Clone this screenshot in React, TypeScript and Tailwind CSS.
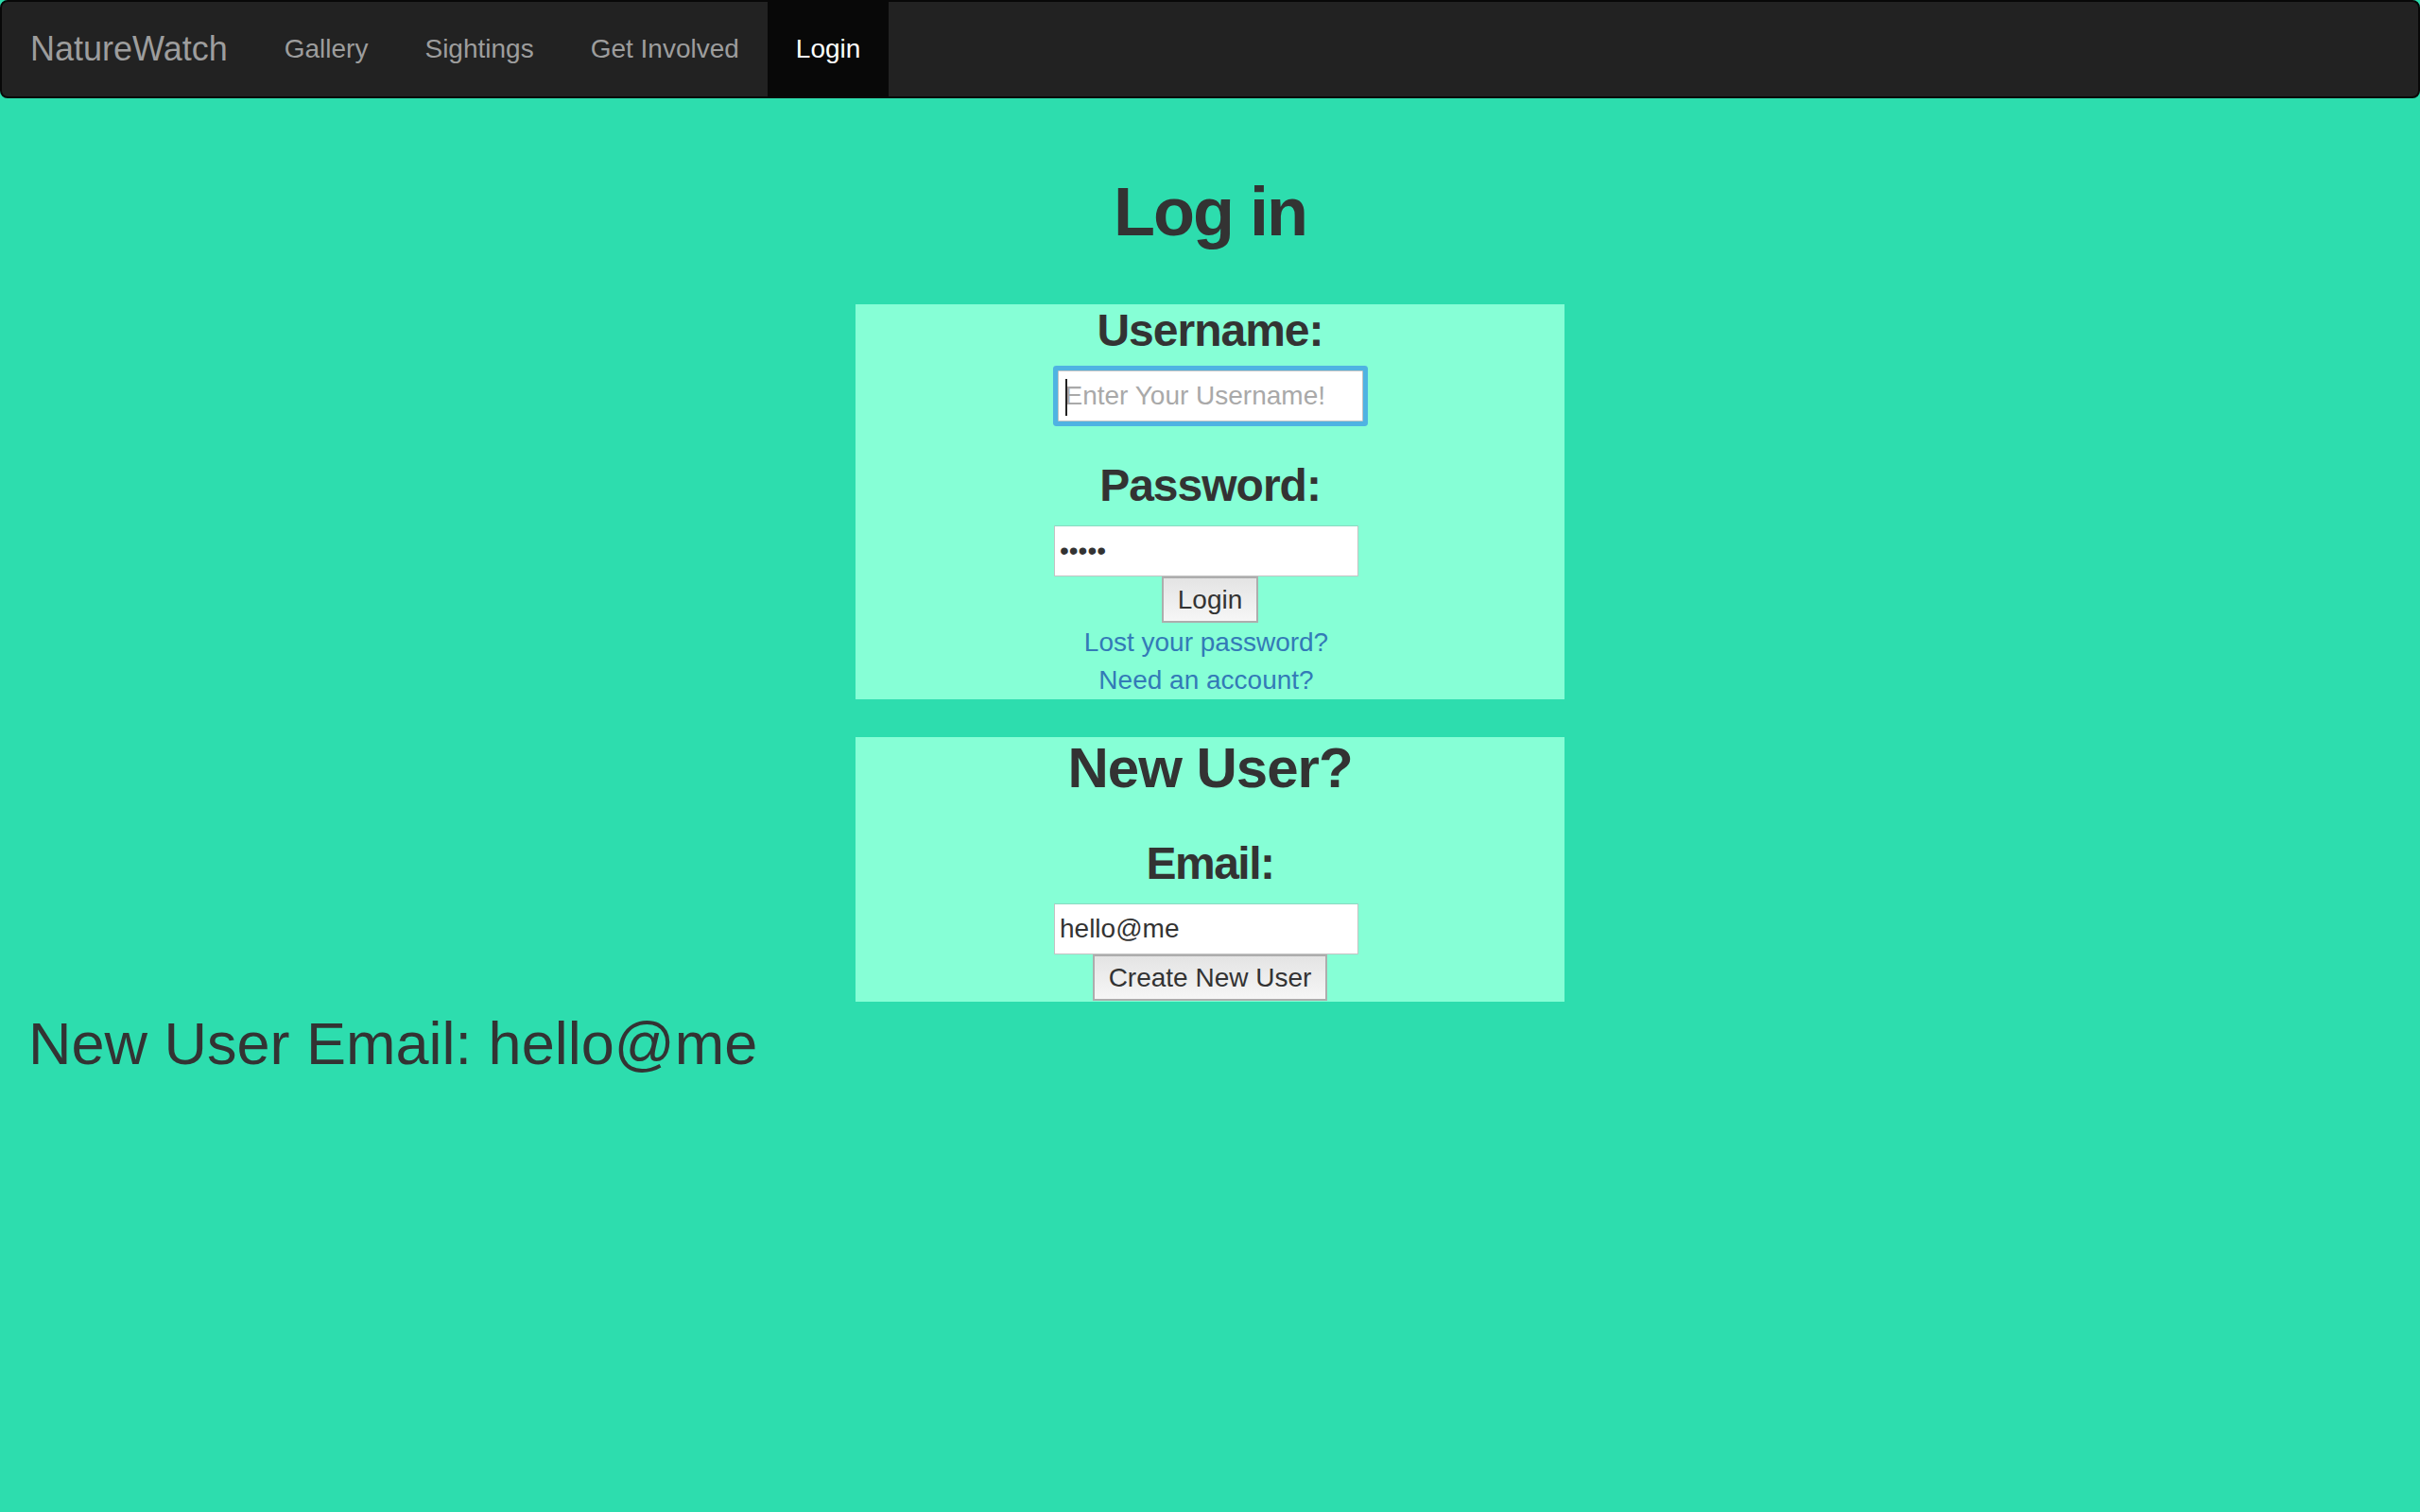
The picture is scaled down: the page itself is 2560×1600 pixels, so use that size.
import React from "react";

const navLinks = ["Gallery", "Sightings", "Get Involved", "Login"];

export default function App() {
  const active = "Login";

  return (
    <div className="min-h-screen bg-[#2dddae] font-['Liberation_Sans',Arial,sans-serif] text-[#333]">
      <nav className="flex h-[104px] rounded-[8px] border-2 border-[#080808] bg-[#222]">
        <a className="block px-[30px] py-[30px] text-[36px] leading-[40px] text-[#9d9d9d]">NatureWatch</a>
        <ul className="flex">
          {navLinks.map((l) => (
            <li key={l}>
              <a
                className={
                  l === active
                    ? "block bg-[#080808] px-[30px] py-[30px] text-[28px] leading-[40px] text-white"
                    : "block px-[30px] py-[30px] text-[28px] leading-[40px] text-[#9d9d9d]"
                }
              >
                {l}
              </a>
            </li>
          ))}
        </ul>
      </nav>

      <h1 className="mt-[81px] mb-[58px] text-center text-[72px] font-bold leading-[79px] tracking-[-2px]">Log in</h1>

      {/* login box */}
      <div className="mx-auto flex w-[750px] flex-col items-center bg-[#86ffd6] text-center">
        <h3 className="mb-[20px] pt-[6px] text-[48px] font-bold leading-[44px] tracking-[-1px]">Username:</h3>
        <div className="relative">
          <input
            type="text"
            placeholder="Enter Your Username!"
            className="block h-[54px] w-[323px] rounded-[1px] border border-[#c3c3c3] bg-white pl-[7px] text-[28px] text-[#333] shadow-[0_0_0_5px_#4fb3e2] outline-none placeholder:text-[#a9a9a9]"
          />
          <span className="absolute top-[9px] left-[8px] h-[39px] w-[2px] bg-[#222]" />
        </div>

        <h3 className="mt-[40px] mb-[20px] pt-[6px] text-[48px] font-bold leading-[44px] tracking-[-1px]">Password:</h3>
        <input
          type="password"
          defaultValue="12345"
          className="mr-[8px] block h-[54px] w-[322px] border border-[#c3c3c3] border-t-[#8ad9c0] bg-white pl-[5px] text-[28px] text-[#333] outline-none"
        />
        <button className="mb-[1px] h-[49px] border-2 border-[#adadad] bg-linear-to-b from-[#e4e4e4] to-[#f6f6f6] px-[15px] text-[28px] leading-[40px] text-[#333]">
          Login
        </button>
        <a className="mr-[8px] block text-[28px] leading-[40px] text-[#337ab7]">Lost your password?</a>
        <a className="mr-[8px] block text-[28px] leading-[40px] text-[#337ab7]">Need an account?</a>
      </div>

      {/* new user box */}
      <div className="mx-auto mt-[40px] flex w-[750px] flex-col items-center bg-[#86ffd6] text-center">
        <h2 className="text-[60px] font-bold leading-[66px] tracking-[-1px]">New User?</h2>
        <h3 className="mt-[40px] mb-[20px] pt-[6px] text-[48px] font-bold leading-[44px] tracking-[-1.5px]">Email:</h3>
        <input
          type="email"
          defaultValue="hello@me"
          className="mr-[8px] block h-[54px] w-[322px] border border-[#c3c3c3] border-t-[#8ad9c0] bg-white pl-[5px] text-[28px] text-[#333] outline-none"
        />
        <button className="mb-[1px] h-[49px] border-2 border-[#adadad] bg-linear-to-b from-[#e4e4e4] to-[#f6f6f6] px-[15px] text-[28px] leading-[40px] text-[#333]">
          Create New User
        </button>
      </div>

      <div className="mt-[10px] px-[30px] text-[63px] leading-[69px]">New User Email: hello@me</div>
    </div>
  );
}
